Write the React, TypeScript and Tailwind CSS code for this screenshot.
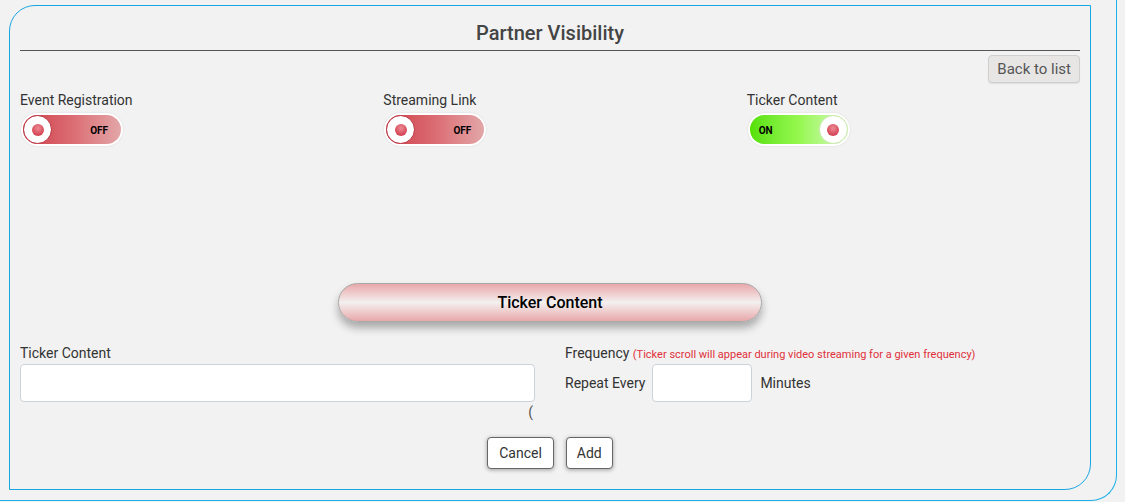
import React, { useState } from 'react';

const Toggle = ({ on }: { on: boolean }) => (
  <div className="w-[102px] h-[33px] rounded-full bg-white p-[2px] shadow-[0_0_2px_rgba(0,0,0,0.12)]">
    {on ? (
      <div className="relative h-full w-full rounded-full bg-gradient-to-r from-[#55e000] via-[#96f84e] to-[#d4f7b8]">
        <span className="absolute left-[9px] top-1/2 -translate-y-1/2 text-[10px] font-bold text-black">ON</span>
        <div className="absolute right-0 top-0 w-[29px] h-[29px] rounded-full bg-white border border-[#c9e8b0] flex items-center justify-center">
          <div className="w-[12px] h-[12px] rounded-full bg-[radial-gradient(circle_at_50%_35%,#ee8a94,#c8283a)]"></div>
        </div>
      </div>
    ) : (
      <div className="relative h-full w-full rounded-full bg-gradient-to-r from-[#cf3a47] via-[#db6c73] to-[#e2a6a8]">
        <span className="absolute right-[13px] top-1/2 -translate-y-1/2 text-[10px] font-bold text-black">OFF</span>
        <div className="absolute left-0 top-0 w-[29px] h-[29px] rounded-full bg-white border border-[#b82c3a] flex items-center justify-center">
          <div className="w-[12px] h-[12px] rounded-full bg-[radial-gradient(circle_at_50%_35%,#ee8a94,#c8283a)]"></div>
        </div>
      </div>
    )}
  </div>
);

const App = () => {
  const [content, setContent] = useState('');
  const [minutes, setMinutes] = useState('');

  const toggles = [
    { label: 'Event Registration', on: false },
    { label: 'Streaming Link', on: false },
    { label: 'Ticker Content', on: true },
  ];

  return (
    <div className="w-[1125px] h-[502px] bg-[#f2f2f2] overflow-hidden font-['Roboto',sans-serif] text-[#333]">
      <div className="w-[1117px] h-[501px] border-r border-b border-[#1ab0e8] rounded-br-[26px] pl-[9px] pt-[5px]">
        <div className="w-[1082px] h-[485px] border border-[#1aa6e0] rounded-tl-[26px] rounded-br-[26px] px-[10px] pt-[15px]">
          <h2 className="text-center text-[20px] leading-[24px] font-medium text-[#444] pb-[5px] border-b border-[#555]">
            Partner Visibility
          </h2>

          <div className="flex justify-end mt-[4px]">
            <button className="h-[28px] px-[8px] rounded-[4px] bg-[#e7e6e5] border border-[#cfcfcf] text-[15px] text-[#555] shadow-[0_1px_1px_rgba(0,0,0,0.08)]">
              Back to list
            </button>
          </div>

          <div className="grid grid-cols-3 gap-x-[30px] mt-[7px]">
            {toggles.map((t) => (
              <div key={t.label}>
                <div className="text-[14px] leading-[20px] text-[#333]">{t.label}</div>
                <div className="mt-[3px] ml-[1px]">
                  <Toggle on={t.on} />
                </div>
              </div>
            ))}
          </div>

          <div className="flex justify-center mt-[137px]">
            <button className="w-[424px] h-[39px] rounded-full border border-[#a8a8a8] bg-gradient-to-b from-[#e8a8aa] via-[#f3f0f0] to-[#e8a8aa] text-[16px] font-medium text-black shadow-[0_6px_8px_rgba(0,0,0,0.3)]">
              Ticker Content
            </button>
          </div>

          <div className="grid grid-cols-2 gap-x-[30px] mt-[21px]">
            <div>
              <div className="text-[14px] leading-[20px]">Ticker Content</div>
              <input
                value={content}
                onChange={(e) => setContent(e.target.value)}
                className="mt-[1px] w-full h-[38px] bg-white border border-[#ccd3da] rounded-[4px] px-2 outline-none"
              />
              <div className="text-right text-[14px] leading-[20px] text-[#555] pr-[2px]">(</div>
            </div>
            <div>
              <div className="h-[20px] text-[14px] leading-[20px] whitespace-nowrap">
                Frequency <span className="text-[11px] leading-[20px] text-[#e0303a]">(Ticker scroll will appear during video streaming for a given frequency)</span>
              </div>
              <div className="mt-[1px] flex items-center gap-[7px] text-[14px]">
                <span>Repeat Every</span>
                <input
                  value={minutes}
                  onChange={(e) => setMinutes(e.target.value)}
                  className="w-[100px] h-[38px] bg-white border border-[#ccd3da] rounded-[4px] px-2 outline-none"
                />
                <span className="ml-[1px]">Minutes</span>
              </div>
            </div>
          </div>

          <div className="flex justify-center gap-[12px] mt-[15px]">
            <button className="h-[32px] px-[11px] bg-white border border-[#666] rounded-[4px] text-[14px] text-[#333] shadow-[0_1px_4px_rgba(0,0,0,0.35)]">
              Cancel
            </button>
            <button className="h-[32px] px-[10px] bg-white border border-[#666] rounded-[4px] text-[14px] text-[#333] shadow-[0_1px_4px_rgba(0,0,0,0.35)]">
              Add
            </button>
          </div>
        </div>
      </div>
    </div>
  );
};

export default App;
